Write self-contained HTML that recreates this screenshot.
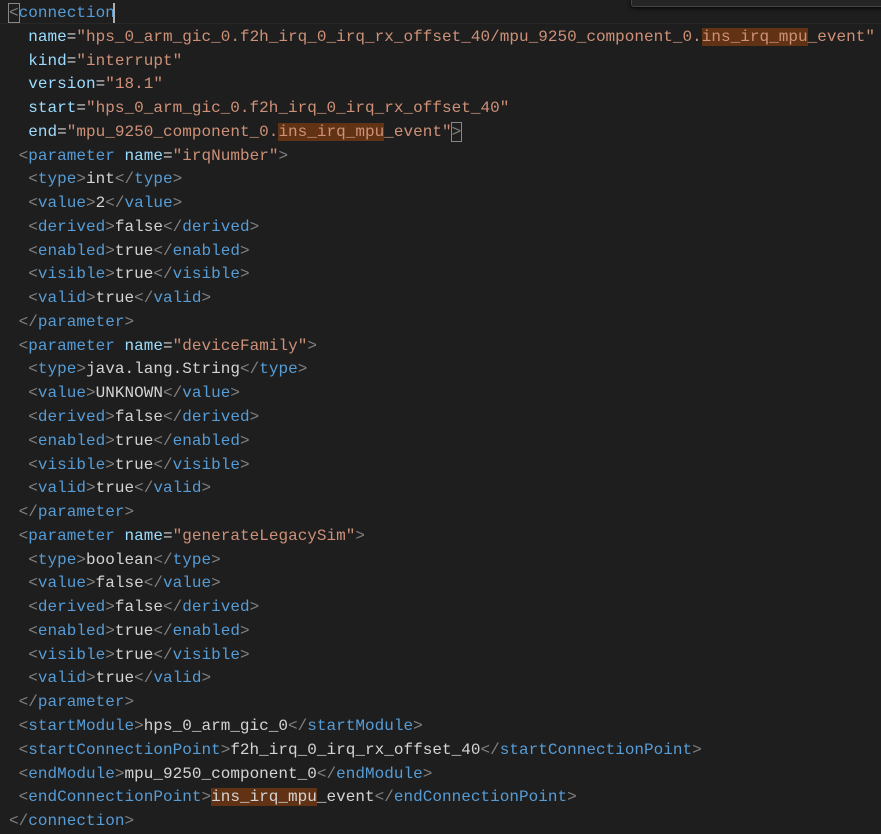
<!DOCTYPE html>
<html><head><style>
body{margin:0;background:#1e1e1e;width:881px;height:834px;overflow:hidden;position:relative}
pre{margin:0;position:absolute;left:9px;top:2px;font-family:"Liberation Mono",monospace;font-size:16px;line-height:23.77px;color:#d4d4d4;letter-spacing:0.02px}
.b{color:#808080}.t{color:#569cd6}.a{color:#9cdcfe}.s{color:#ce9178}
.h{background:#613214}
.cur{position:absolute;left:0;top:0;width:881px;height:23px;border-bottom:1px solid #282828}
.w{position:absolute;left:631px;top:-2px;width:260px;height:7px;background:#252526;border:1px solid #454545;border-radius:3px;box-shadow:0 1px 4px #000}
.caret{position:absolute;left:113px;top:3px;width:2px;height:20px;background:#aeafad}
.bx{outline:1px solid #888;}
</style></head><body>
<div class="cur"></div>
<div class="w"></div>
<pre><span class="b bx">&lt;</span><span class="t">connection</span>
  <span class="a">name</span>=<span class="s">"hps_0_arm_gic_0.f2h_irq_0_irq_rx_offset_40/mpu_9250_component_0.<span class="h">ins_irq_mpu</span>_event"</span>
  <span class="a">kind</span>=<span class="s">"interrupt"</span>
  <span class="a">version</span>=<span class="s">"18.1"</span>
  <span class="a">start</span>=<span class="s">"hps_0_arm_gic_0.f2h_irq_0_irq_rx_offset_40"</span>
  <span class="a">end</span>=<span class="s">"mpu_9250_component_0.<span class="h">ins_irq_mpu</span>_event"</span><span class="b bx">&gt;</span>
 <span class="b">&lt;</span><span class="t">parameter</span> <span class="a">name</span>=<span class="s">"irqNumber"</span><span class="b">&gt;</span>
  <span class="b">&lt;</span><span class="t">type</span><span class="b">&gt;</span>int<span class="b">&lt;/</span><span class="t">type</span><span class="b">&gt;</span>
  <span class="b">&lt;</span><span class="t">value</span><span class="b">&gt;</span>2<span class="b">&lt;/</span><span class="t">value</span><span class="b">&gt;</span>
  <span class="b">&lt;</span><span class="t">derived</span><span class="b">&gt;</span>false<span class="b">&lt;/</span><span class="t">derived</span><span class="b">&gt;</span>
  <span class="b">&lt;</span><span class="t">enabled</span><span class="b">&gt;</span>true<span class="b">&lt;/</span><span class="t">enabled</span><span class="b">&gt;</span>
  <span class="b">&lt;</span><span class="t">visible</span><span class="b">&gt;</span>true<span class="b">&lt;/</span><span class="t">visible</span><span class="b">&gt;</span>
  <span class="b">&lt;</span><span class="t">valid</span><span class="b">&gt;</span>true<span class="b">&lt;/</span><span class="t">valid</span><span class="b">&gt;</span>
 <span class="b">&lt;/</span><span class="t">parameter</span><span class="b">&gt;</span>
 <span class="b">&lt;</span><span class="t">parameter</span> <span class="a">name</span>=<span class="s">"deviceFamily"</span><span class="b">&gt;</span>
  <span class="b">&lt;</span><span class="t">type</span><span class="b">&gt;</span>java.lang.String<span class="b">&lt;/</span><span class="t">type</span><span class="b">&gt;</span>
  <span class="b">&lt;</span><span class="t">value</span><span class="b">&gt;</span>UNKNOWN<span class="b">&lt;/</span><span class="t">value</span><span class="b">&gt;</span>
  <span class="b">&lt;</span><span class="t">derived</span><span class="b">&gt;</span>false<span class="b">&lt;/</span><span class="t">derived</span><span class="b">&gt;</span>
  <span class="b">&lt;</span><span class="t">enabled</span><span class="b">&gt;</span>true<span class="b">&lt;/</span><span class="t">enabled</span><span class="b">&gt;</span>
  <span class="b">&lt;</span><span class="t">visible</span><span class="b">&gt;</span>true<span class="b">&lt;/</span><span class="t">visible</span><span class="b">&gt;</span>
  <span class="b">&lt;</span><span class="t">valid</span><span class="b">&gt;</span>true<span class="b">&lt;/</span><span class="t">valid</span><span class="b">&gt;</span>
 <span class="b">&lt;/</span><span class="t">parameter</span><span class="b">&gt;</span>
 <span class="b">&lt;</span><span class="t">parameter</span> <span class="a">name</span>=<span class="s">"generateLegacySim"</span><span class="b">&gt;</span>
  <span class="b">&lt;</span><span class="t">type</span><span class="b">&gt;</span>boolean<span class="b">&lt;/</span><span class="t">type</span><span class="b">&gt;</span>
  <span class="b">&lt;</span><span class="t">value</span><span class="b">&gt;</span>false<span class="b">&lt;/</span><span class="t">value</span><span class="b">&gt;</span>
  <span class="b">&lt;</span><span class="t">derived</span><span class="b">&gt;</span>false<span class="b">&lt;/</span><span class="t">derived</span><span class="b">&gt;</span>
  <span class="b">&lt;</span><span class="t">enabled</span><span class="b">&gt;</span>true<span class="b">&lt;/</span><span class="t">enabled</span><span class="b">&gt;</span>
  <span class="b">&lt;</span><span class="t">visible</span><span class="b">&gt;</span>true<span class="b">&lt;/</span><span class="t">visible</span><span class="b">&gt;</span>
  <span class="b">&lt;</span><span class="t">valid</span><span class="b">&gt;</span>true<span class="b">&lt;/</span><span class="t">valid</span><span class="b">&gt;</span>
 <span class="b">&lt;/</span><span class="t">parameter</span><span class="b">&gt;</span>
 <span class="b">&lt;</span><span class="t">startModule</span><span class="b">&gt;</span>hps_0_arm_gic_0<span class="b">&lt;/</span><span class="t">startModule</span><span class="b">&gt;</span>
 <span class="b">&lt;</span><span class="t">startConnectionPoint</span><span class="b">&gt;</span>f2h_irq_0_irq_rx_offset_40<span class="b">&lt;/</span><span class="t">startConnectionPoint</span><span class="b">&gt;</span>
 <span class="b">&lt;</span><span class="t">endModule</span><span class="b">&gt;</span>mpu_9250_component_0<span class="b">&lt;/</span><span class="t">endModule</span><span class="b">&gt;</span>
 <span class="b">&lt;</span><span class="t">endConnectionPoint</span><span class="b">&gt;</span><span class="h">ins_irq_mpu</span>_event<span class="b">&lt;/</span><span class="t">endConnectionPoint</span><span class="b">&gt;</span>
<span class="b">&lt;/</span><span class="t">connection</span><span class="b">&gt;</span></pre>
<div class="caret"></div>
</body></html>
